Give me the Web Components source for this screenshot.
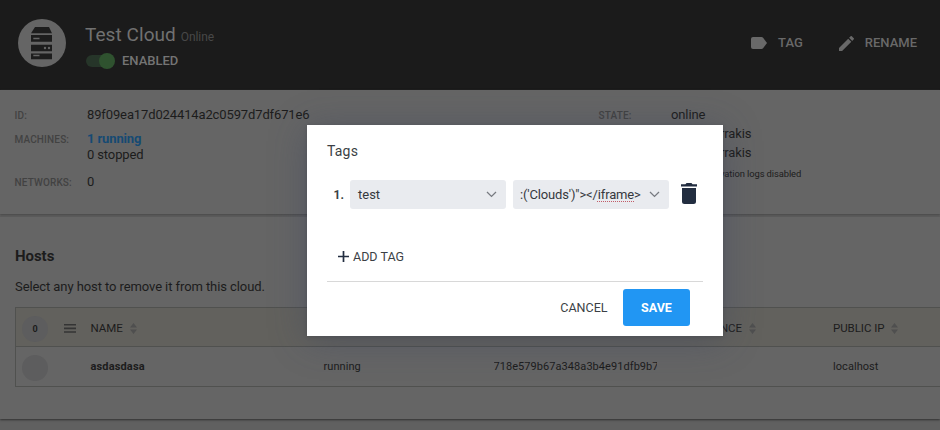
<!DOCTYPE html>
<html lang="en"><head><meta charset="utf-8"><title>Test Cloud</title>
<style>html,body{margin:0;height:100%;overflow:hidden;background:#606060;font-family:Roboto,sans-serif}</style></head>
<body><cloud-page></cloud-page>
<script>
const define=(name,css,html)=>customElements.define(name,class extends HTMLElement{
  constructor(){super();this.attachShadow({mode:'open'}).innerHTML='<style>*{box-sizing:border-box}'+css+'</style>'+html;}
});

define('cloud-badge',':host{display:block;width:48px;height:48px}svg{display:block}',
`<svg width="48" height="48" viewBox="0 0 48 48"><circle cx="24" cy="24" r="24" fill="#656565"/><g fill="#1d1d1d"><path d="M17 8h14l3 6.200H13z"/><path d="M13 16h21v6.800H13zM13 25.800h21v6.400H13zM13 34.600h21v5.600H13z"/></g><g fill="#656565"><path d="M15.300 18.800h6.200v1.500h-6.200zM15.300 35.700h6.200v1.500h-6.200z"/><circle cx="27" cy="29" r="1.200"/><circle cx="31" cy="29" r="1.200"/></g></svg>`);

define('toggle-switch',`:host{display:flex;align-items:center;width:29px;height:16px}
.t{width:24px;height:12px;border-radius:6px;background:#263529;display:flex;align-items:center}
.k{flex:none;width:16px;height:16px;border-radius:50%;background:#2f522f;margin-left:13px}`,
`<div class="t"><div class="k"></div></div>`);

define('header-action',`:host{display:flex;align-items:center;height:20px;font-size:13px;line-height:20px;font-weight:500;color:#696969;white-space:nowrap}
::slotted(svg){display:block;flex:none}`,`<slot name="icon"></slot><slot></slot>`);

define('page-header',`:host{display:flex;height:90px;background:#1b1b1b;padding:19px 23px 0 18px}
.title{margin-left:19px;flex:1}
.name{height:31px;line-height:31px;font-size:19px;color:#717171;white-space:nowrap;letter-spacing:.06px}
.name small{font-size:12px;color:#484848;margin-left:5px;letter-spacing:-.1px}
.on{display:flex;align-items:center;height:22px;font-size:13px;font-weight:500;color:#747474;padding-left:1px}
.on span{margin:-2px 0 0 7px}
.actions{display:flex;padding-top:14px}
svg{margin-right:11px}
header-action+header-action{margin-left:36px}`,
`<cloud-badge></cloud-badge><div class="title"><div class="name">Test Cloud<small>Online</small></div><div class="on"><toggle-switch></toggle-switch><span>ENABLED</span></div></div>
<div class="actions"><header-action><svg slot="icon" width="16" height="12" viewBox="0 0 16 12"><path fill="#696969" d="M2 0h8.500q1 0 1.600.8L16 6l-3.900 5.200q-.6.8-1.600.8H2Q0 12 0 10V2Q0 0 2 0z"/></svg>TAG</header-action>
<header-action><svg slot="icon" width="15" height="15" viewBox="3 3 18 18"><path fill="#696969" d="M3 17.250V21h3.750L17.810 9.940l-3.750-3.750L3 17.250zM20.710 7.040a1 1 0 0 0 0-1.410l-2.340-2.340a1 1 0 0 0-1.410 0l-1.830 1.830 3.750 3.750z"/></svg>RENAME</header-action></div>`);

define('info-row',`:host{display:grid;grid-template-columns:var(--label,72px) 1fr;height:var(--h);line-height:16px;font-size:13px;letter-spacing:-.125px;color:#1c1c1c;white-space:nowrap}
.l{font-size:10px;font-weight:500;color:#424242;letter-spacing:.15px;padding-top:1px;line-height:16px;margin-left:-.5px}`,
`<div class="l"><slot name="label"></slot></div><div><slot></slot></div>`);

define('info-panel',`:host{display:grid;grid-template-columns:584px 1fr;height:124px;background:#656565;padding:17px 0 0 15px;box-shadow:0 1px 2px #484848}
b{font-weight:700;color:#154a73}
.logs{font-size:9.400px;letter-spacing:-.1px}`,
`<div><info-row style="--h:24px"><span slot="label">ID:</span>89f09ea17d024414a2c0597d7df671e6</info-row>
<info-row style="--h:43px"><span slot="label">MACHINES:</span><b>1 running</b><br>0 stopped</info-row>
<info-row style="--h:20px"><span slot="label">NETWORKS:</span>0</info-row></div>
<div class="right"><info-row style="--h:19px"><span slot="label">STATE:</span>online</info-row>
<info-row style="--h:19px;--label:121px">rrakis</info-row><info-row style="--h:20px;--label:121px">rrakis</info-row>
<info-row style="--h:20px;--label:121px"><span class="logs">vation logs disabled</span></info-row></div>`);

define('sort-label',`:host{display:flex;align-items:center;white-space:nowrap;padding-top:2px}svg{margin-left:7px}`,
`<slot></slot><svg width="7" height="11" viewBox="0 0 7 11"><path fill="#4f4f4f" d="M0 4.600 3.500 0 7 4.600zM0 6.400 3.500 11 7 6.400z"/></svg>`);

define('host-row',`:host{display:grid;grid-template-columns:38px 36.500px 233px 170px 168.500px 171px 1fr;align-items:center;height:var(--h,40px);border-bottom:1px solid #50514f;background:var(--bg);color:#1c1c1c;white-space:nowrap}
.c{display:flex;align-items:center;justify-content:center;width:26px;height:26px;border-radius:50%;background:#5d5d5e;margin:3px 0 0 6px;font-size:9px;font-weight:700}`,
`<div class="c"><slot name="count"></slot></div><slot></slot>`);

define('hosts-panel',`:host{display:block;margin-top:3px;height:202px;background:#656565;padding:28px 0 0 15px;box-shadow:0 1px 2px #303030;color:#1c1c1c}
h2{margin:0;font-size:15px;font-weight:700;line-height:22px;letter-spacing:-.05px}
p{margin:10px 0 0;font-size:13px;line-height:20px;letter-spacing:-.085px}
.table{margin-top:10px;border:1px solid #50514f;border-right:0;border-bottom:0}
.head{--bg:#62615d;--h:39px;font-size:11.500px;letter-spacing:-.05px}.row{font-size:11px;--h:40px}
.id{width:163px;overflow:hidden}svg{display:block;margin:3px 0 0 10px}
.row b{letter-spacing:.15px}.row span{letter-spacing:.06px}`,
`<h2>Hosts</h2><p>Select any host to remove it from this cloud.</p><div class="table">
<host-row class="head"><span slot="count">0</span><svg width="12" height="9" viewBox="0 0 12 9"><path fill="#343434" d="M0 0h12v1.600H0zM0 3.600h12v1.600H0zM0 7.200h12v1.600H0z"/></svg><sort-label>NAME</sort-label><i></i><i></i><sort-label style="justify-content:flex-end;width:94px">NCE</sort-label><sort-label>PUBLIC IP</sort-label></host-row>
<host-row class="row"><i></i><b>asdasdasa</b><span>running</span><span class="id">718e579b67a348a3b4e91dfb9b7</span><i></i><span>localhost</span></host-row></div>`);

define('tag-select',`:host{display:flex;align-items:center;justify-content:space-between;width:156px;height:29px;border-radius:3px;background:#e9ebef;padding:0 9px 0 8px;font-size:13px;color:#35383d;white-space:nowrap}svg{display:block}`,
`<slot></slot><svg width="11" height="7" viewBox="0 0 11 7"><path d="M1 1l4.500 4.400L10 1" fill="none" stroke="#777a80" stroke-width="1.300"/></svg>`);

define('tags-dialog',`:host{display:flex;flex-direction:column;width:416px;height:211px;background:#fff;padding:16px 20px 0;box-shadow:0 4px 34px rgba(55,65,95,.4),0 1px 4px rgba(0,0,0,.15);color:#3b3f45}
h3{margin:0;font-size:14px;font-weight:400;line-height:20px;letter-spacing:.2px}
.tag{display:flex;align-items:center;height:29px;margin-top:19px}
.n{width:23px;padding-left:6.500px;font-size:12px;font-weight:700}
tag-select+tag-select{margin-left:7px}.tag svg{margin:-3px 0 0 12px}
u{text-decoration:underline dotted #c25c68 1px;text-underline-offset:2px}
.clip{display:block;letter-spacing:-.14px;margin-left:-1px}
.add{display:flex;align-items:center;margin:37px 0 0 11px;height:20px;font-size:12.500px}
.add svg{margin-right:4px}
.foot{display:flex;justify-content:flex-end;align-items:center;border-top:1px solid #d8d8d8;margin-top:15px;padding:7px 13px 0 0;font-size:12.500px}
.save{margin-left:15.500px;width:67px;height:37px;border-radius:3px;background:#2196f3;color:#fff;font-weight:700;display:flex;align-items:center;justify-content:center}`,
`<h3>Tags</h3><div class="tag"><span class="n">1.</span><tag-select>test</tag-select><tag-select><span class="clip">:('Clouds')"&gt;&lt;/<u>iframe</u>&gt;</span></tag-select><svg width="16" height="21" viewBox="0 0 16 21"><path fill="#222d40" d="M0 1.200h4.400L5.600 0h4.800l1.200 1.200H16v2.400H0zM1 5h14v13.500q0 2.500-2.500 2.500h-9Q1 21 1 18.500z"/></svg></div>
<div class="add"><svg width="11" height="11" viewBox="0 0 11 11"><path d="M5.500 0v11M0 5.500h11" stroke="#222d40" stroke-width="1.700"/></svg>ADD TAG</div>
<div class="foot"><span>CANCEL</span><span class="save">SAVE</span></div>`);

define('cloud-page',`:host{display:block;position:relative;height:430px;overflow:hidden}
tags-dialog{position:absolute;left:307px;top:125px}`,
`<page-header></page-header><info-panel></info-panel><hosts-panel></hosts-panel><tags-dialog></tags-dialog>`);
</script></body></html>
